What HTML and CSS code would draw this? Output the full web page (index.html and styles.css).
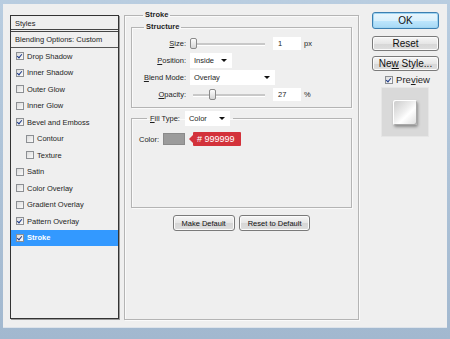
FILE: index.html
```html
<!DOCTYPE html>
<html lang="en">
<head>
    <meta charset="UTF-8">
    <title>Layer Style</title>
    <link rel="stylesheet" href="styles.css">
</head>
<body>
    <div class="dialog">
        <!-- styles list -->
        <div class="style-list">
            <div class="list-title">Styles</div>
            <div class="list-blend">Blending Options: Custom</div>
            <div class="item"><span class="check on"></span>Drop Shadow</div>
            <div class="item"><span class="check on"></span>Inner Shadow</div>
            <div class="item"><span class="check"></span>Outer Glow</div>
            <div class="item"><span class="check"></span>Inner Glow</div>
            <div class="item"><span class="check on"></span>Bevel and Emboss</div>
            <div class="item sub"><span class="check"></span>Contour</div>
            <div class="item sub"><span class="check"></span>Texture</div>
            <div class="item"><span class="check"></span>Satin</div>
            <div class="item"><span class="check"></span>Color Overlay</div>
            <div class="item"><span class="check"></span>Gradient Overlay</div>
            <div class="item"><span class="check on"></span>Pattern Overlay</div>
            <div class="item active"><span class="check on"></span>Stroke</div>
        </div>

        <!-- settings -->
        <fieldset class="group outer">
            <legend class="bold">Stroke</legend>

            <fieldset class="group structure">
                <legend class="bold">Structure</legend>
                <div class="form-grid">
                    <label><u>S</u>ize:</label>
                    <div class="ctrl">
                        <div class="slider"><span class="thumb" style="left: 0px"></span></div>
                        <span class="field">1</span>
                        <span class="unit">px</span>
                    </div>

                    <label><u>P</u>osition:</label>
                    <div class="ctrl">
                        <span class="select pos">Inside</span>
                    </div>

                    <label><u>B</u>lend Mode:</label>
                    <div class="ctrl">
                        <span class="select blend">Overlay</span>
                    </div>

                    <label><u>O</u>pacity:</label>
                    <div class="ctrl">
                        <div class="slider"><span class="thumb" style="left: 19px"></span></div>
                        <span class="field">27</span>
                        <span class="unit">%</span>
                    </div>
                </div>
            </fieldset>

            <fieldset class="group fill">
                <legend class="fill-legend"><span><u>F</u>ill Type:</span><span class="select fill-type">Color</span></legend>
                <div class="color-row">
                    <span>Color:</span>
                    <span class="swatch"></span>
                    <span class="tag"># 999999</span>
                </div>
            </fieldset>

            <div class="defaults">
                <button class="btn small">Make Default</button>
                <button class="btn small">Reset to Default</button>
            </div>
        </fieldset>

        <!-- buttons -->
        <div class="side">
            <button class="btn big default">OK</button>
            <button class="btn big">Reset</button>
            <button class="btn big">Ne<u>w</u> Style...</button>
            <div class="preview-check"><span class="check on"></span>Pre<u>v</u>iew</div>
            <div class="preview-box"><span class="preview-chip"></span></div>
        </div>
    </div>
</body>
</html>
```

FILE: styles.css
```css
* {
    box-sizing: border-box;
    margin: 0;
    padding: 0;
}

body {
    width: 450px;
    height: 339px;
    overflow: hidden;
    background: linear-gradient(#b9cde0, #a2b8cf);
    font-family: 'Liberation Sans', Arial, sans-serif;
    font-size: 7.5px;
    color: #1e1e1e;
}

u {
    text-decoration: underline;
}

.bold {
    font-weight: bold;
}

.dialog {
    display: flex;
    align-items: flex-start;
    margin: 4px 3px 0 3px;
    height: 324px;
    background: #efefef;
    border-bottom: 1px solid #dde3ea;
}

/* left list */
.style-list {
    margin: 11px 0 0 7px;
    width: 109px;
    height: 304px;
    border: 1px solid #333;
    box-shadow: 1px 1px 0 #9a9a9a;
    background: #efefef;
}

.list-title {
    height: 16px;
    line-height: 15px;
    padding-left: 4px;
    border-bottom: 3px double #444;
}

.list-blend {
    height: 16px;
    line-height: 15px;
    padding-left: 4px;
    border-bottom: 1px solid #555;
}

.item {
    display: flex;
    align-items: center;
    height: 16.5px;
    padding-left: 5px;
}

.item.sub {
    padding-left: 15px;
}

.item.active {
    background: #3399ff;
    color: #fff;
    font-weight: bold;
}

.check {
    position: relative;
    display: inline-block;
    width: 8px;
    height: 8px;
    margin-right: 3px;
    border: 1px solid #8c8f93;
    background: linear-gradient(135deg, #dcdcdc, #fafafa);
    flex-shrink: 0;
}

.check.on::after {
    content: "";
    position: absolute;
    left: 1px;
    top: 0;
    width: 2px;
    height: 4px;
    border: solid #1d3a8a;
    border-width: 0 1.5px 1.5px 0;
    transform: rotate(40deg);
}

/* fieldsets */
.group {
    border: 1px solid #b4b4b4;
    box-shadow: inset 1px 1px 0 #fafafa, 1px 1px 0 #fafafa;
}

.group legend {
    line-height: 10px;
    padding: 0 2px;
}

.outer {
    margin: 6px 0 0 5px;
    width: 235px;
    height: 310px;
    padding: 2px 6px 0 6px;
}

.outer > legend {
    margin-left: 12px;
}

.structure {
    padding: 3px 0 4px 0;
}

.structure > legend {
    margin-left: 12px;
}

.form-grid {
    display: grid;
    grid-template-columns: 54px 1fr;
    grid-auto-rows: 17px;
    column-gap: 4px;
    align-items: center;
}

.form-grid label {
    text-align: right;
}

.ctrl {
    display: flex;
    align-items: center;
}

.slider {
    position: relative;
    width: 79px;
    height: 11px;
}

.slider::before {
    content: "";
    position: absolute;
    left: 3px;
    right: 4px;
    top: 5px;
    height: 2px;
    background: #c8c8c8;
    border-bottom: 1px solid #fff;
}

.thumb {
    position: absolute;
    top: 0;
    width: 7px;
    height: 11px;
    border: 1px solid #8a8a8a;
    border-radius: 2px;
    background: linear-gradient(#fdfdfd, #d6d6d6);
}

.field {
    margin-left: 4px;
    width: 28px;
    height: 13px;
    line-height: 13px;
    padding-left: 5px;
    background: #fff;
}

.unit {
    margin-left: 3px;
}

.select {
    position: relative;
    display: inline-block;
    height: 15px;
    line-height: 15px;
    padding-left: 4px;
    background: #fff;
}

.select::after {
    content: "";
    position: absolute;
    right: 5px;
    top: 6px;
    border-left: 3px solid transparent;
    border-right: 3px solid transparent;
    border-top: 3px solid #111;
}

.select.pos {
    width: 42px;
}

.select.blend {
    width: 85px;
}

.fill {
    margin-top: 3px;
    height: 97px;
    padding: 6px 0 0 7px;
}

.fill-legend {
    margin-left: 8px;
}

.fill-legend.fill-legend {
    display: flex;
    align-items: center;
    line-height: 15px;
    padding: 0 3px;
}

.select.fill-type {
    width: 45px;
    margin-left: 5px;
}

.color-row {
    display: flex;
    align-items: center;
    height: 14px;
}

.swatch {
    width: 22px;
    height: 12px;
    margin-left: 4px;
    background: #9b9b9b;
    border: 1px solid #8a8a8a;
}

.tag {
    position: relative;
    margin-left: 8px;
    height: 14px;
    line-height: 14px;
    padding: 0 6px 0 4px;
    background: #d3323b;
    color: #fff;
    font-size: 9px;
    border-radius: 1px;
}

.tag::before {
    content: "";
    position: absolute;
    left: -4px;
    top: 3px;
    border-top: 4px solid transparent;
    border-bottom: 4px solid transparent;
    border-right: 4px solid #d3323b;
}

.defaults {
    display: flex;
    justify-content: center;
    gap: 4px;
    margin-top: 7px;
}

/* buttons */
.btn {
    font-family: 'Liberation Sans', Arial, sans-serif;
    color: #111;
    border: 1px solid #7a7a7a;
    border-radius: 3px;
    background: linear-gradient(#f6f6f6 0%, #e6e6e6 50%, #d6d6d6 51%, #dedede 100%);
    box-shadow: inset 0 0 0 1px #fbfbfb;
}

.btn.small {
    height: 16px;
    font-size: 7.5px;
    padding: 0 8px;
}

.side {
    display: flex;
    flex-direction: column;
    align-items: center;
    margin: 8px 0 0 13px;
    width: 67px;
}

.btn.big {
    width: 67px;
    height: 15px;
    margin-bottom: 5px;
    font-size: 10px;
    line-height: 12px;
}

.btn.big:nth-child(3) {
    margin-bottom: 3px;
}

.btn.default {
    height: 17px;
    margin-bottom: 7px;
    border-color: #3c7fb1;
    box-shadow: inset 0 0 0 1px #9fd4f1;
    background: linear-gradient(#eaf6fd 0%, #d9f0fc 50%, #bee6fd 51%, #a7d9f5 100%);
}

.preview-check {
    display: flex;
    align-items: center;
    margin: 0 0 0 4px;
    font-size: 9.5px;
}

.preview-box {
    display: flex;
    align-items: center;
    justify-content: center;
    margin: 2px 0 0 -1px;
    width: 48px;
    height: 50px;
    background: #d9d9d9;
    border: 1px solid #e6e6e6;
}

.preview-chip {
    width: 24px;
    height: 25px;
    border-radius: 2px;
    background: linear-gradient(135deg, #c9c9c9 0%, #eeeeee 45%, #ffffff 60%, #dcdcdc 100%);
    box-shadow: 1px 2px 3px rgba(0, 0, 0, 0.35), inset 1px 1px 0 #fff, inset -1px -1px 0 #a8a8a8;
}
```
